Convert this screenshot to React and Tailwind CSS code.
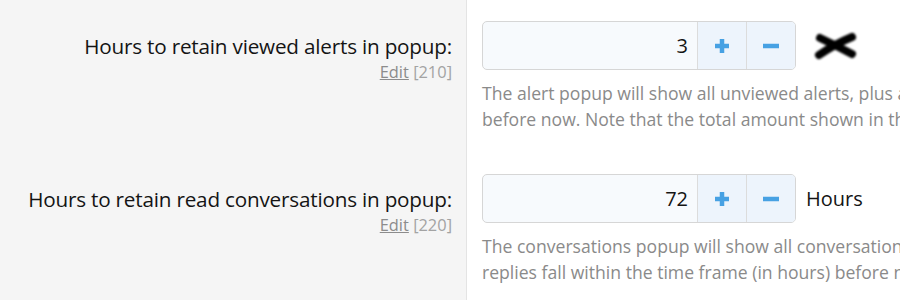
import React from "react"

const rows = [
  {
    label: "Hours to retain viewed alerts in popup:",
    code: "210",
    value: "3",
    suffix: "cross",
    hint: [
      "The alert popup will show all unviewed alerts, plus any alerts that were viewed within the time frame (in hours)",
      "before now. Note that the total amount shown in the popup may be limited.",
    ],
  },
  {
    label: "Hours to retain read conversations in popup:",
    code: "220",
    value: "72",
    suffix: "Hours",
    hint: [
      "The conversations popup will show all conversations with unread messages, plus read conversations whose last",
      "replies fall within the time frame (in hours) before now.",
    ],
  },
]

const Cross = () => (
  <svg width="44" height="30" viewBox="0 0 44 30" className="blur-[0.8px]">
    <path d="M6 7 Q21 14 38 23" stroke="#000" strokeWidth="8" strokeLinecap="round" fill="none" />
    <path d="M5 24 Q21 13 38 6" stroke="#000" strokeWidth="8" strokeLinecap="round" fill="none" />
  </svg>
)

const Spinner = ({ value }) => (
  <div className="flex w-[314px] h-[49px] rounded-[5px] border border-[#d6d6d6] overflow-hidden bg-[#f7fafd]">
    <div className="flex-1 flex items-center justify-end pr-[9px] text-[20px] text-[#141414]">
      {value}
    </div>
    <button className="w-[49px] flex items-center justify-center bg-[#edf4fc] border-l border-[#dcdcdc]">
      <svg width="18" height="18" viewBox="0 0 18 18">
        <path d="M9 2v14M2 9h14" stroke="#47a1e3" strokeWidth="4.5" />
      </svg>
    </button>
    <button className="w-[49px] flex items-center justify-center bg-[#edf4fc] border-l border-[#dcdcdc]">
      <svg width="18" height="18" viewBox="0 0 18 18">
        <path d="M1 9h16" stroke="#47a1e3" strokeWidth="4.5" />
      </svg>
    </button>
  </div>
)

export default function App() {
  return (
    <div
      className="w-[900px] h-[300px] overflow-hidden bg-white"
      style={{ fontFamily: '"Open Sans", "Noto Sans", sans-serif' }}
    >
      {rows.map((row) => (
        <div key={row.code} className="flex h-[153px]">
          {/* Label column */}
          <div className="w-[467px] shrink-0 bg-[#f5f5f5] border-r border-[#e4e4e4] pr-[14px] pt-[32px] text-right">
            <div className="text-[20.7px] leading-[28px] text-[#141414] tracking-[-0.2px]">{row.label}</div>
            <div className="text-[16.4px] leading-[20px] mt-[2px]">
              <span className="underline text-[#8c8c8c]">Edit</span>{" "}
              <span className="text-[#a3a3a3]">[{row.code}]</span>
            </div>
          </div>

          {/* Control column */}
          <div className="flex-1 pl-[15px] pt-[21px] min-w-0">
            <div className="flex items-center gap-[10px]">
              <Spinner value={row.value} />
              {row.suffix === "cross" ? (
                <div className="ml-[8px]">
                  <Cross />
                </div>
              ) : (
                <span className="text-[20px] text-[#141414]">{row.suffix}</span>
              )}
            </div>
            <div className="mt-[10px] text-[17.6px] leading-[26px] text-[#8a8a8a] whitespace-nowrap">
              {row.hint.map((line) => (
                <div key={line}>{line}</div>
              ))}
            </div>
          </div>
        </div>
      ))}
    </div>
  )
}
